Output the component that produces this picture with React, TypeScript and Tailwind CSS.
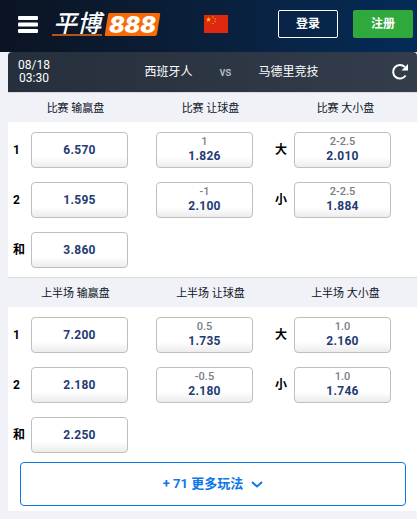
interface Odd {
  line?: string;
  price: string;
}

interface Row {
  label: string;
  winner: Odd;
  handicap?: Odd;
  totalLabel?: string;
  total?: Odd;
}

interface Section {
  titles: string[];
  rows: Row[];
}

const sections: Section[] = [
  {
    titles: ['比赛 输赢盘', '比赛 让球盘', '比赛 大小盘'],
    rows: [
      {
        label: '1',
        winner: { price: '6.570' },
        handicap: { line: '1', price: '1.826' },
        totalLabel: '大',
        total: { line: '2-2.5', price: '2.010' },
      },
      {
        label: '2',
        winner: { price: '1.595' },
        handicap: { line: '-1', price: '2.100' },
        totalLabel: '小',
        total: { line: '2-2.5', price: '1.884' },
      },
      { label: '和', winner: { price: '3.860' } },
    ],
  },
  {
    titles: ['上半场 输赢盘', '上半场 让球盘', '上半场 大小盘'],
    rows: [
      {
        label: '1',
        winner: { price: '7.200' },
        handicap: { line: '0.5', price: '1.735' },
        totalLabel: '大',
        total: { line: '1.0', price: '2.160' },
      },
      {
        label: '2',
        winner: { price: '2.180' },
        handicap: { line: '-0.5', price: '2.180' },
        totalLabel: '小',
        total: { line: '1.0', price: '1.746' },
      },
      { label: '和', winner: { price: '2.250' } },
    ],
  },
];

const Logo = () => (
  <svg className="h-8 w-28 overflow-visible" viewBox="0 0 112 32" role="img" aria-label="平博888">
    <path d="M0 27H50" stroke="#f26a0c" strokeWidth="1.5" />
    <text
      x="1"
      y="24"
      fill="#fff"
      fontSize="24"
      fontWeight="500"
      fontStyle="italic"
      fontFamily="'Noto Sans CJK SC', sans-serif"
    >
      平博
    </text>
    <path d="M57 5H107q1.500 0 1.200 1.500L105 26q-.4 2-2 2H54q-1.500 0-1.200-1.500L56 7q.3-2 1-2z" fill="#f96a07" />
    <text
      x="57"
      y="25"
      fill="#fff"
      fontSize="23"
      fontWeight="900"
      fontStyle="italic"
      fontFamily="Inter, sans-serif"
    >
      888
    </text>
  </svg>
);

const star = 'M0-1 .22-.31H.95L.36.12.59.81 0 .38-.59.81-.36.12-.95-.31H-.22z';

const Flag = () => (
  <svg className="h-[18px] w-6" viewBox="0 0 24 18" role="img" aria-label="中国">
    <path d="M0 0h24v18H0z" fill="#de2910" />
    <g fill="#ffde00">
      <path d={star} transform="translate(4.500 4.700) scale(2.700)" />
      <path d={star} transform="translate(9 2) scale(1)" />
      <path d={star} transform="translate(11 4) scale(1)" />
      <path d={star} transform="translate(11 6.500) scale(1)" />
      <path d={star} transform="translate(9 8.500) scale(1)" />
    </g>
  </svg>
);

const OddButton = ({ odd }: { odd: Odd }) => (
  <button className="flex h-9 flex-col items-center justify-center rounded border border-[#bfbfbf] bg-linear-to-b from-white from-70% to-[#ececec] text-xs">
    {odd.line && <span className="h-3 text-[11px] leading-3 font-medium text-[#767d89]">{odd.line}</span>}
    <span className="h-4 leading-4 font-bold tracking-wide text-[#1f3b73]">{odd.price}</span>
  </button>
);

const Market = ({ section }: { section: Section }) => (
  <section>
    <div className="grid h-[30px] grid-cols-3 items-center border-t border-[#d9dadd] bg-[#f1f2f7] pt-1 pr-1 text-center text-[11px] text-[#0c1526]">
      {section.titles.map((title) => (
        <h2 key={title}>{title}</h2>
      ))}
    </div>
    <div className="flex flex-col gap-3.5 pt-2.5 pb-[9px]">
      {section.rows.map((row) => (
        <div
          key={row.label}
          className="grid grid-cols-[23px_1fr_28px_1fr_41px_1fr_26px] items-center text-xs font-bold text-black"
        >
          <span className="pl-[5px]">{row.label}</span>
          <OddButton odd={row.winner} />
          <span />
          {row.handicap && <OddButton odd={row.handicap} />}
          {row.totalLabel && <span className="pl-[22px]">{row.totalLabel}</span>}
          {row.total && <OddButton odd={row.total} />}
        </div>
      ))}
    </div>
  </section>
);

const App = () => {
  return (
    <div className="min-h-screen bg-[#f1f2f7] font-[Roboto,'Noto_Sans_CJK_SC',sans-serif]">
      {/* Top bar */}
      <header className="flex h-[52px] items-center bg-linear-to-r from-[#0b1422] to-[#042b57] pr-1 pb-1 pl-[18px]">
        <button aria-label="菜单">
          <svg className="h-[17px] w-5" viewBox="0 0 20 17" fill="#fff">
            <rect width="20" height="4" rx="1" />
            <rect y="6.500" width="20" height="4" rx="1" />
            <rect y="13" width="20" height="4" rx="1" />
          </svg>
        </button>
        <a href="#" className="ml-3.5">
          <Logo />
        </a>
        <button className="ml-10">
          <Flag />
        </button>
        <div className="ml-auto flex gap-[15px] text-xs font-bold text-white">
          <button className="h-7 w-[60px] rounded-xs border border-white">登录</button>
          <button className="h-7 w-[60px] rounded-xs bg-[#2fa83c]">注册</button>
        </div>
      </header>

      <main className="ml-2 rounded-t bg-white pb-[5px]">
        {/* Match info */}
        <div className="flex h-10 items-center rounded-t bg-linear-to-r from-[#262f3c] to-[#333d4b] pr-2 pl-2.5 text-white">
          <time className="text-center text-xs leading-[13px]">
            08/18
            <br />
            03:30
          </time>
          <div className="grid flex-1 grid-cols-[1fr_66px_1fr] items-center pl-2.5 text-xs">
            <span className="text-right">西班牙人</span>
            <span className="text-center font-medium text-[#b4b9c1]">vs</span>
            <span>马德里竞技</span>
          </div>
          <button aria-label="刷新">
            <svg className="size-[18px]" viewBox="0 0 18 18" fill="none">
              <path d="M13.800 4A6.800 6.800 0 1 0 14.600 12.500" stroke="#fff" strokeWidth="2" />
              <path d="M17 1v6.500h-6.500z" fill="#fff" />
            </svg>
          </button>
        </div>

        {sections.map((section) => (
          <Market key={section.titles[0]} section={section} />
        ))}

        <div className="pr-[11px] pl-3">
          <button className="flex h-11 w-full items-center justify-center gap-2 rounded border border-[#0d76e8] text-[13px] font-bold text-[#0d76e8]">
            + 71 更多玩法
            <svg className="h-[7px] w-3" viewBox="0 0 12 7" fill="none">
              <path d="M1 1l5 4.500L11 1" stroke="currentColor" strokeWidth="2" />
            </svg>
          </button>
        </div>
      </main>
    </div>
  );
};

export default App;
